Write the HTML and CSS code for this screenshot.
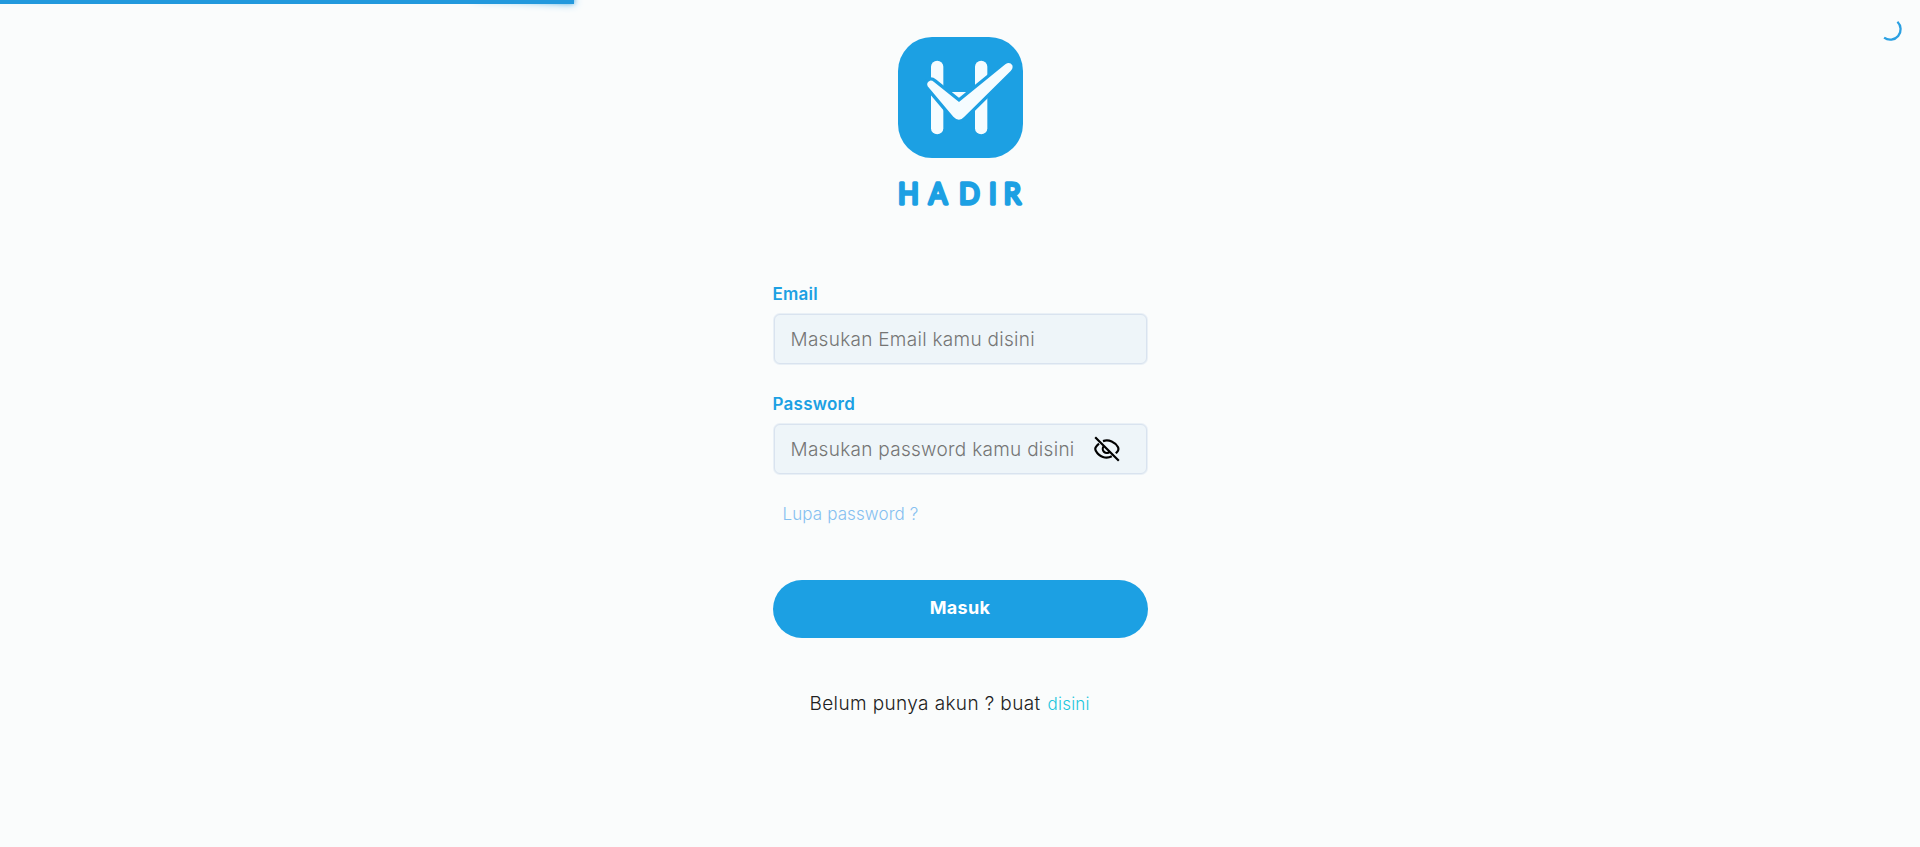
FILE: index.html
```html
<!DOCTYPE html>
<html lang="id">
<head>
<meta charset="utf-8">
<title>Hadir</title>
<link rel="stylesheet" href="styles.css">
</head>
<body>
<div class="progress"></div>
<svg class="spinner" viewBox="0 0 24 24"><path d="M17.7 3.6A10 10 0 0 1 4.9 18.9" /></svg>
<main class="login">
  <svg class="logo" viewBox="0 0 480 600" role="img" aria-label="Hadir">
    <rect class="logo-tile" x="54" y="51" width="375" height="363" rx="102" />
    <g class="logo-mark">
      <rect x="153" y="122" width="37" height="221" rx="18.5" />
      <rect x="285" y="122" width="37" height="221" rx="18.5" />
      <path d="M215 216H259L237 250Z" />
      <path class="logo-check" d="M143 199Q138 187 150 182Q156 181 162 186L237 246L376 133Q389 124 397 136Q400 145 392 153L253 290Q237 308 220 290Z" />
    </g>
    <text class="logo-name" y="551" x="58 157 255 352 399" transform="scale(.93 1)">HADIR</text>
  </svg>
  <form class="form">
    <label class="label" for="email">Email</label>
    <div class="field"><input class="input" id="email" type="email" placeholder="Masukan Email kamu disini"></div>
    <label class="label" for="password">Password</label>
    <div class="field">
      <input class="input input-password" id="password" type="password" placeholder="Masukan password kamu disini">
      <svg class="eye" viewBox="0 0 26 26">
        <path d="M1.2 1.2L24.8 24.8M9 5.1C15 3 21.2 6.2 23.9 11Q24.9 13 23.9 14.8L21.9 17.4M5 7.7Q2.8 9.4 1.6 11.5Q.9 13 1.8 14.7C5.2 21 12 23.3 17.8 20.3M9.9 10.1A4 4 0 0 0 15.8 15.7" />
      </svg>
    </div>
    <a class="forgot">Lupa password ?</a>
    <button class="submit" type="button">Masuk</button>
    <p class="signup"><span class="question">Belum punya akun ? buat</span><a class="signup-link">disini</a></p>
  </form>
</main>
</body>
</html>
```

FILE: styles.css
```css
* { box-sizing: border-box; }
body {
  margin: 0;
  min-height: 847px;
  background: #fafcfc;
  font-family: Inter, "Open Sans", sans-serif;
}
.progress {
  position: absolute;
  top: 0;
  left: 0;
  width: 574px;
  height: 4px;
  background: #2299dd;
}
.progress::after {
  content: "";
  position: absolute;
  right: 0;
  top: -4px;
  width: 100px;
  height: 100%;
  transform: rotate(3deg);
  box-shadow: 0 0 10px #2299dd, 0 0 5px #2299dd;
  opacity: 1;
  z-index: -1;
}
.spinner {
  position: absolute;
  top: 18px;
  right: 16px;
  width: 25px;
  height: 25px;
  fill: none;
  stroke: #2ba0e2;
  stroke-width: 2.2;
}
.login {
  display: flex;
  flex-direction: column;
  align-items: center;
  padding-top: 20px;
}
.logo { width: 160px; height: 200px; }
.logo-tile { fill: #1ca0e3; }
.logo-mark { fill: #f5fcff; }
.logo-check { stroke: #1ca0e3; stroke-width: 20; paint-order: stroke; }
.logo-name {
  font: 400 88px Lato, sans-serif;
  fill: #1ca0e3;
  stroke: #1ca0e3;
  stroke-width: 10;
  stroke-linejoin: round;
}
.form {
  display: flex;
  flex-direction: column;
  width: 375px;
  padding-top: 62px;
}
.label {
  height: 24px;
  margin-bottom: 8px;
  font-size: 17px;
  line-height: 25px;
  font-weight: 600;
  letter-spacing: .25px;
  color: #1ca0e3;
}
.field {
  display: flex;
  align-items: center;
  height: 50px;
  margin: 0 1px 28px;
  padding: 1px 16px 0;
  border: 1px solid #d9e3ef;
  border-radius: 6px;
  background: #eef5f9;
  box-shadow: 0 0 0 1px #e9f0f6;
}
.input {
  flex: 1;
  min-width: 0;
  padding: 0;
  border: 0;
  outline: 0;
  background: transparent;
  font: 340 19px/28px Inter, sans-serif;
  letter-spacing: .28px;
}
.input::placeholder { color: #757575; opacity: 1; }
.input-password { flex: 0 0 283px; }
.eye {
  width: 26px;
  height: 26px;
  margin: 0 0 2px 20px;
  fill: none;
  stroke: #000;
  stroke-width: 2.2;
}
.forgot {
  margin-left: 10px;
  font-size: 17px;
  line-height: 24px;
  font-weight: 340;
  letter-spacing: .1px;
  color: #86c0f0;
}
.submit {
  height: 58px;
  margin-top: 54px;
  padding: 0 0 2px;
  border: 0;
  border-radius: 29px;
  background: #1ca0e3;
  color: #fff;
  font: 700 18px/26px Inter, sans-serif;
  letter-spacing: .3px;
}
.signup {
  display: flex;
  align-items: baseline;
  gap: 7px;
  margin: 52px 0 0 37px;
  line-height: 28px;
  font-weight: 340;
  color: #212121;
}
.question { font-size: 19px; letter-spacing: .38px; }
.signup-link { font-size: 17px; letter-spacing: .2px; color: #1ec6dc; }
```
